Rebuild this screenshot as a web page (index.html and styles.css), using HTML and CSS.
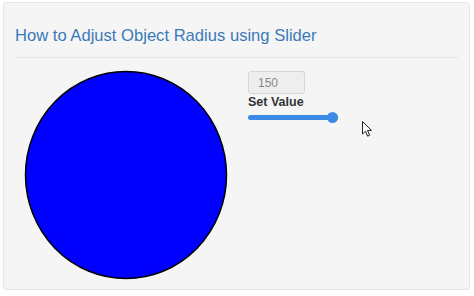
FILE: index.html
```html
<!DOCTYPE html>
<html lang="en">
<head>
    <meta charset="UTF-8">
    <title>Object Radius Slider</title>
    <link rel="stylesheet" href="styles.css">
</head>
<body>
    <div class="well">
        <h3 class="title">How to Adjust Object Radius using Slider</h3>
        <hr class="divider">
        <div class="content">
            <svg class="shape" width="206" height="210" viewBox="0 0 206 210">
                <ellipse cx="103" cy="105" rx="100.5" ry="103.5" fill="#0000ff" stroke="#000" stroke-width="1.5"/>
            </svg>
            <div class="controls">
                <input type="text" class="value-box" value="150" disabled>
                <label class="value-label" for="radius">Set Value</label>
                <input type="range" id="radius" class="slider" min="0" max="150" value="150">
            </div>
        </div>
        <svg class="cursor" width="11" height="17" viewBox="0 0 11 17">
            <path d="M0.5 0.5 L0.5 13 L3.5 10.2 L5.6 15.2 L7.6 14.3 L5.5 9.4 L9.5 9.4 Z" fill="#fff" stroke="#222" stroke-width="1" stroke-linejoin="round"/>
        </svg>
    </div>
</body>
</html>
```

FILE: styles.css
```css
body {
    margin: 0;
    background: #fff;
    font-family: "Liberation Sans", Arial, sans-serif;
}
.well {
    position: relative;
    margin: 2px 4px 0 3px;
    height: 288px;
    box-sizing: border-box;
    padding: 0 11px;
    background-color: #f5f5f5;
    border: 1px solid #e6e6e6;
    border-radius: 3px;
}
.title {
    margin: 0;
    padding-top: 23px;
    font-size: 16.6px;
    font-weight: normal;
    line-height: 19px;
    color: #3a7ab8;
}
.divider {
    margin: 12px 0 0 0;
    border: 0;
    border-top: 1px solid #e4e4e4;
}
.content {
    display: flex;
    align-items: flex-start;
    margin-top: 11px;
}
.shape {
    display: block;
    margin-left: 8px;
    margin-top: 1px;
}
.controls {
    display: flex;
    flex-direction: column;
    margin-left: 19px;
    margin-top: 2px;
}
.value-box {
    width: 57px;
    height: 23px;
    box-sizing: border-box;
    padding: 0 9px;
    font-family: inherit;
    font-size: 12px;
    color: #8a8a8a;
    background-color: #eee;
    border: 1px solid #d6d6d6;
    border-radius: 3px;
}
.value-label {
    margin-top: 1px;
    font-size: 12.5px;
    font-weight: bold;
    color: #333;
    line-height: 14px;
}
.slider {
    -webkit-appearance: none;
    appearance: none;
    width: 90px;
    height: 11px;
    margin: 3px 0 0 0;
    background: transparent;
}
.slider::-webkit-slider-runnable-track {
    height: 5px;
    border-radius: 3px;
    background: #3b8be6;
}
.slider::-webkit-slider-thumb {
    -webkit-appearance: none;
    width: 11px;
    height: 11px;
    margin-top: -3px;
    border-radius: 50%;
    background: #3b8be6;
    border: none;
}
.cursor {
    position: absolute;
    left: 358px;
    top: 118px;
}
```
